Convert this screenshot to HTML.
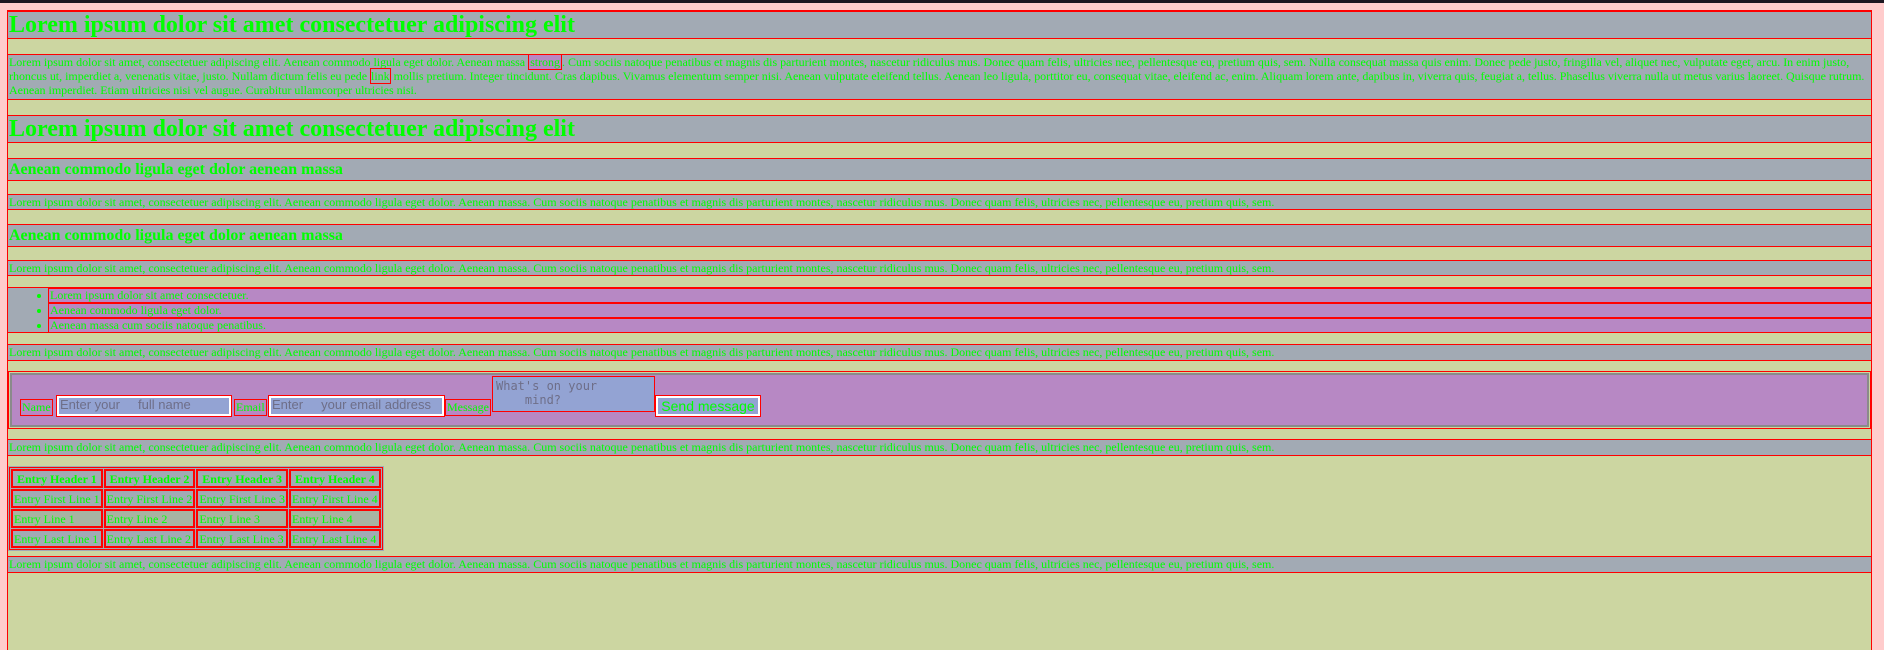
<!DOCTYPE html>
<html><head><meta charset="utf-8"><style>
*{box-sizing:border-box;margin:0;padding:0}
body{width:1884px;height:638px;background:#ffcccc;position:relative;overflow:hidden;font-family:"Liberation Serif",serif;color:#00ff00}
#bar{position:absolute;left:0;top:0;width:1884px;height:3px;background:#1c1620}
#c{position:absolute;left:7px;top:10px;width:1865px;height:640px;border:1px solid #f00;border-bottom:none;background:#ccd6a1}
.b{position:absolute;left:0;width:1863px;border-top:1px solid #f00;border-bottom:1px solid #f00;background:#a2aab4;overflow:hidden;white-space:nowrap}
h1{font-size:24px;font-weight:bold;line-height:26px;padding-left:1px}
h2{font-size:16px;font-weight:bold;line-height:21px;padding-left:1px}
p{font-size:12px;line-height:14px;padding-left:1px}
.wrap{white-space:normal}
.wrap p{padding-right:0;letter-spacing:-0.02px}
strong{font-weight:normal;background:#b788c4;border:1px solid #f00;padding:0 1px}
a{color:#00ff00;border:1px solid #f00}
ul{list-style:none}
li{position:relative;background:#b788c4;border-top:1px solid #f00;border-bottom:1px solid #f00;height:15px;font-size:12px;line-height:13px;padding-left:1px}
.f{position:absolute;border:1px solid #f00;font-family:"Liberation Sans",sans-serif}
.lab{font-family:"Liberation Serif",serif;font-size:12px;line-height:15px;padding:0 1px}
.in{background:#93a3d3;border:1px solid #f00;color:#6e6e88;font-size:13px;line-height:18px;padding-left:3px;box-shadow:inset 0 0 0 2px #fff}
table{position:absolute;border:1px solid #f00;outline:1px solid #a2aab4;border-collapse:separate;border-spacing:1px;background:#a2aab4}
td,th{border:2px solid #f00;font-size:12px;height:19px;line-height:14px;padding:0 1px;white-space:nowrap}
th{font-weight:bold;padding:0 3px}
</style></head><body>
<div id="bar"></div>
<div id="c">
<div class="b" style="top:0;height:28px"><h1>Lorem ipsum dolor sit amet consectetuer adipiscing elit</h1></div>
<div class="b wrap" style="top:43px;height:46px"><p>Lorem ipsum dolor sit amet, consectetuer adipiscing elit. Aenean commodo ligula eget dolor. Aenean massa <strong>strong</strong>. Cum sociis natoque penatibus et magnis dis parturient montes, nascetur ridiculus mus. Donec quam felis, ultricies nec, pellentesque eu, pretium quis, sem. Nulla consequat massa quis enim. Donec pede justo, fringilla vel, aliquet nec, vulputate eget, arcu. In enim justo, rhoncus ut, imperdiet a, venenatis vitae, justo. Nullam dictum felis eu pede <a>link</a> mollis pretium. Integer tincidunt. Cras dapibus. Vivamus elementum semper nisi. Aenean vulputate eleifend tellus. Aenean leo ligula, porttitor eu, consequat vitae, eleifend ac, enim. Aliquam lorem ante, dapibus in, viverra quis, feugiat a, tellus. Phasellus viverra nulla ut metus varius laoreet. Quisque rutrum. Aenean imperdiet. Etiam ultricies nisi vel augue. Curabitur ullamcorper ultricies nisi.</p></div>
<div class="b" style="top:104px;height:28px"><h1>Lorem ipsum dolor sit amet consectetuer adipiscing elit</h1></div>
<div class="b" style="top:147px;height:23px"><h2>Aenean commodo ligula eget dolor aenean massa</h2></div>
<div class="b" style="top:183px;height:16px"><p>Lorem ipsum dolor sit amet, consectetuer adipiscing elit. Aenean commodo ligula eget dolor. Aenean massa. Cum sociis natoque penatibus et magnis dis parturient montes, nascetur ridiculus mus. Donec quam felis, ultricies nec, pellentesque eu, pretium quis, sem.</p></div>
<div class="b" style="top:213px;height:23px"><h2>Aenean commodo ligula eget dolor aenean massa</h2></div>
<div class="b" style="top:249px;height:16px"><p>Lorem ipsum dolor sit amet, consectetuer adipiscing elit. Aenean commodo ligula eget dolor. Aenean massa. Cum sociis natoque penatibus et magnis dis parturient montes, nascetur ridiculus mus. Donec quam felis, ultricies nec, pellentesque eu, pretium quis, sem.</p></div>
<div class="b" style="top:276px;height:46px;border-left:none"><ul style="border-left:1px solid #f00;margin-left:40px"><li>Lorem ipsum dolor sit amet consectetuer.</li><li>Aenean commodo ligula eget dolor.</li><li>Aenean massa cum sociis natoque penatibus.</li></ul>
<div style="position:absolute;left:29px;top:6px;width:4px;height:4px;border-radius:50%;background:#0f0"></div>
<div style="position:absolute;left:29px;top:21px;width:4px;height:4px;border-radius:50%;background:#0f0"></div>
<div style="position:absolute;left:29px;top:36px;width:4px;height:4px;border-radius:50%;background:#0f0"></div></div>
<div class="b" style="top:333px;height:17px"><p>Lorem ipsum dolor sit amet, consectetuer adipiscing elit. Aenean commodo ligula eget dolor. Aenean massa. Cum sociis natoque penatibus et magnis dis parturient montes, nascetur ridiculus mus. Donec quam felis, ultricies nec, pellentesque eu, pretium quis, sem.</p></div>
<div style="position:absolute;left:0;top:360px;width:1863px;height:58px;border:1px solid #f00;padding:1px">
<div style="position:relative;width:100%;height:100%;border:2px solid #8a8a8a;background:#b788c4">
<div class="f lab" style="left:8px;top:24px;height:17px">Name</div>
<div class="f in" style="left:44px;top:20px;width:176px;height:22px">Enter your &nbsp;&nbsp;&nbsp; full name</div>
<div class="f lab" style="left:222px;top:24px;height:17px">Email</div>
<div class="f in" style="left:256px;top:20px;width:177px;height:22px">Enter &nbsp;&nbsp;&nbsp; your email address</div>
<div class="f lab" style="left:433px;top:24px;height:17px">Message</div>
<div class="f" style="left:480px;top:1px;width:163px;height:36px;background:#93a3d3;font-family:'DejaVu Sans Mono',monospace;font-size:12px;line-height:14px;color:#6e6e88;padding:2px 3px">What's on your<br>&nbsp;&nbsp;&nbsp; mind?</div>
<div class="f" style="left:643px;top:20px;width:106px;height:22px;background:#93a3d3;box-shadow:inset 0 0 0 2px #fff;font-size:14px;line-height:20px;text-align:center">Send message</div>
</div></div>
<div class="b" style="top:428px;height:17px"><p>Lorem ipsum dolor sit amet, consectetuer adipiscing elit. Aenean commodo ligula eget dolor. Aenean massa. Cum sociis natoque penatibus et magnis dis parturient montes, nascetur ridiculus mus. Donec quam felis, ultricies nec, pellentesque eu, pretium quis, sem.</p></div>
<table style="left:1px;top:456px;width:363px"><tr><th>Entry Header 1</th><th>Entry Header 2</th><th>Entry Header 3</th><th>Entry Header 4</th></tr>
<tr><td>Entry First Line 1</td><td>Entry First Line 2</td><td>Entry First Line 3</td><td>Entry First Line 4</td></tr>
<tr style="background:#a8b3a2"><td>Entry Line 1</td><td>Entry Line 2</td><td>Entry Line 3</td><td>Entry Line 4</td></tr>
<tr><td>Entry Last Line 1</td><td>Entry Last Line 2</td><td>Entry Last Line 3</td><td>Entry Last Line 4</td></tr></table>
<div class="b" style="top:545px;height:17px"><p>Lorem ipsum dolor sit amet, consectetuer adipiscing elit. Aenean commodo ligula eget dolor. Aenean massa. Cum sociis natoque penatibus et magnis dis parturient montes, nascetur ridiculus mus. Donec quam felis, ultricies nec, pellentesque eu, pretium quis, sem.</p></div>
</div>
</body></html>
